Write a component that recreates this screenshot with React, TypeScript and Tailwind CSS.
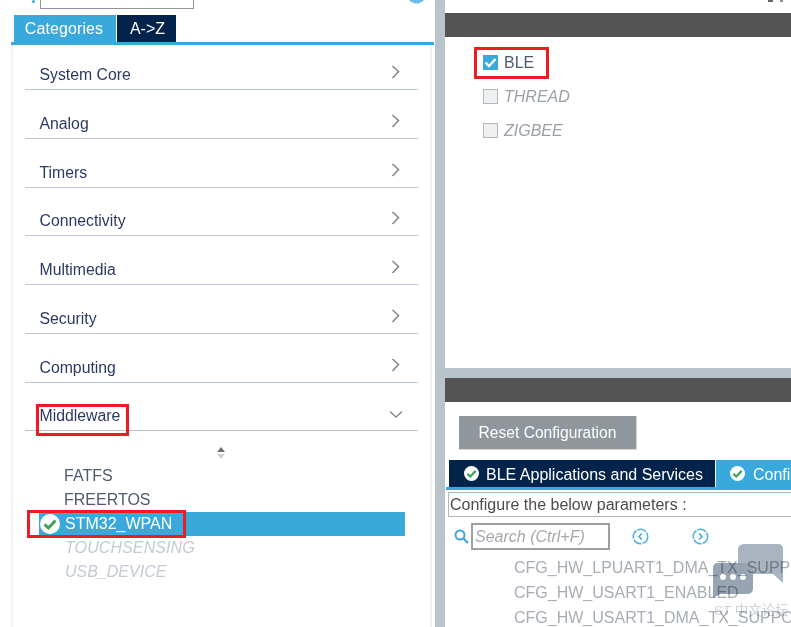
import React from "react";

const font = "font-['Liberation_Sans',Arial,sans-serif]";

function Chevron() {
  return (
    <svg width="9" height="14" viewBox="0 0 9 14" className="mr-[18px] mb-[10px]" fill="none">
      <path d="M1.5 1 L7.5 6.5 L1.5 13" stroke="#85898c" strokeWidth="1.6" />
    </svg>
  );
}

function Row({ label, first }: { label: string; first?: boolean }) {
  return (
    <div className={`mx-[12px] border-b border-[#bcc6dc] flex items-end justify-between ${first ? "h-[45px]" : "h-[48.75px]"}`}>
      <span className="pl-[14.5px] pb-[5px] text-[15.8px] leading-[18px] text-[#2b3a63]">{label}</span>
      <Chevron />
    </div>
  );
}

function GreenCheck({ size }: { size: number }) {
  return (
    <svg width={size} height={size} viewBox="0 0 20 20" className="shrink-0">
      <circle cx="10" cy="10" r="10" fill="#fff" />
      <path d="M4.5 10.5 L8.5 14 L15.5 6.5" stroke="#3fa35f" strokeWidth="3" fill="none" />
    </svg>
  );
}

function RoundArrow({ dir }: { dir: "l" | "r" }) {
  return (
    <svg width="17" height="17" viewBox="0 0 17 17" fill="none">
      <circle cx="8.5" cy="8.5" r="7.2" stroke="#4db3e2" strokeWidth="1.6" strokeDasharray="9 1.2" />
      <path d={dir === "l" ? "M9.8 5.5 L7 8.5 L9.8 11.5" : "M7.2 5.5 L10 8.5 L7.2 11.5"} stroke="#39a9dc" strokeWidth="1.5" />
    </svg>
  );
}

export default function App() {
  return (
    <div className={`${font} relative w-[791px] h-[627px] overflow-hidden bg-[#b8c4ca] flex`}>
      {/* Left */}
      <div className="w-[435px] h-full bg-white flex flex-col shrink-0">
        <div className="h-[15px] relative shrink-0">
          <div className="ml-[40px] w-[154px] h-[9px] border border-t-0 border-[#8f9599]" />
          <div className="absolute left-[32px] top-0 w-[3px] h-[3px] bg-[#39a9dc] rounded-full" />
          <svg width="16" height="4" viewBox="0 0 16 4" className="absolute left-[409px] top-0">
            <path d="M0 0 H15 L13 2 L11 2.5 L10 3.5 L5 3.5 L4 2.5 L2 2 Z" fill="#6cbde6" />
          </svg>
        </div>
        <div className="flex ml-[14px] h-[27px] shrink-0 gap-[1px]">
          <div className="w-[102px] pt-[1px] pr-[2px] bg-[#39a9dc] text-white text-[16px] tracking-[0.1px] flex items-center justify-center">Categories</div>
          <div className="w-[59px] pt-[1px] pl-[2px] bg-[#03234b] text-white text-[16px] flex items-center justify-center">A-&gt;Z</div>
        </div>
        <div className="ml-[11px] w-[423px] h-[3px] bg-[#39a9dc] shrink-0" />
        <div className="ml-[11px] w-[421px] flex-1 border-x-[2px] border-[#f0f1f1]">
          <Row first label="System Core" />
          <Row label="Analog" />
          <Row label="Timers" />
          <Row label="Connectivity" />
          <Row label="Multimedia" />
          <Row label="Security" />
          <Row label="Computing" />
          <div className="mx-[12px] h-[48.75px] border-b border-[#bcc2c6] flex items-end justify-between">
            <span className="pl-[14.5px] pb-[5px] text-[15.8px] leading-[18px] text-[#2b3a63]">Middleware</span>
            <svg width="14" height="9" viewBox="0 0 14 9" className="mr-[15px] mb-[11px]" fill="none">
              <path d="M1 1.5 L7 7 L13 1.5" stroke="#85898c" strokeWidth="1.5" />
            </svg>
          </div>
          <div className="flex flex-col pt-[15px]">
            <svg width="10" height="14" viewBox="0 0 10 14" className="ml-[203px]">
              <path d="M5 1 L9 6 L1 6 Z" fill="#6a6f72" />
              <path d="M5 13 L9 8 L1 8 Z" fill="#cfd2d4" />
            </svg>
            <div className="pl-[51px] mt-[4px] h-[24px] flex items-center text-[16px] text-[#4d5a70]">FATFS</div>
            <div className="pl-[51px] h-[24px] flex items-center text-[16px] text-[#4d5a70]">FREERTOS</div>
            <div className="ml-[26px] w-[366px] h-[24px] bg-[#39a9dc] flex items-center text-[16px] text-white">
              <span className="ml-[1px] mr-[5px] flex"><GreenCheck size={20} /></span>
              STM32_WPAN
            </div>
            <div className="pl-[52px] h-[24px] flex items-center text-[16px] tracking-[0.1px] italic text-[#c3cad4]">TOUCHSENSING</div>
            <div className="pl-[52px] h-[24px] flex items-center text-[16px] italic text-[#c3cad4]">USB_DEVICE</div>
          </div>
        </div>
      </div>

      {/* Right */}
      <div className="ml-[10px] flex-1 min-w-0 h-full flex flex-col">
        <div className="h-[368px] bg-white shrink-0 flex flex-col">
          <div className="h-[13px] flex justify-end gap-[7px] pr-[8px]">
            <div className="w-[5px] h-[2px] bg-[#6b6468]" />
            <div className="w-[3px] h-[2px] bg-[#8a8f9a]" />
          </div>
          <div className="h-[24px] bg-[#535453]" />
          <div className="pl-[38px] pt-[18px] flex flex-col gap-[19px] text-[16px]">
            <div className="flex items-center gap-[6px] h-[15px]">
              <span className="w-[15px] h-[15px] bg-[#39a9dc] flex items-center justify-center">
                <svg width="13" height="11" viewBox="0 0 13 11" fill="none"><path d="M1.5 5.5 L5 9 L11.5 2" stroke="#fff" strokeWidth="2.4" /></svg>
              </span>
              <span className="text-[#4d5a70]">BLE</span>
            </div>
            <div className="flex items-center gap-[6px] h-[15px]">
              <span className="w-[15px] h-[15px] bg-[#eef0f2] border border-[#b3b8bb]" />
              <span className="italic text-[#9aa0a8] w-[67px] overflow-hidden">THREAD</span>
            </div>
            <div className="flex items-center gap-[6px] h-[15px]">
              <span className="w-[15px] h-[15px] bg-[#eef0f2] border border-[#b3b8bb]" />
              <span className="italic text-[#9aa0a8]">ZIGBEE</span>
            </div>
          </div>
        </div>
        <div className="h-[10px] shrink-0" />
        <div className="flex-1 bg-white flex flex-col min-h-0">
          <div className="h-[24px] bg-[#535453] shrink-0" />
          <div className="ml-[14px] mt-[14px] w-[178px] h-[34px] bg-[#90979c] border-b border-r border-[#d3d7da] text-white text-[15.6px] flex items-center justify-center shrink-0">Reset Configuration</div>
          <div className="ml-[4px] mt-[10px] flex h-[27px] shrink-0 gap-[1px]">
            <div className="w-[266px] pt-[2px] bg-[#03234b] text-white text-[16px] flex items-center whitespace-nowrap">
              <span className="ml-[15px] mr-[7px] mb-[2px] flex"><GreenCheck size={15} /></span>BLE Applications and Services
            </div>
            <div className="flex-1 pt-[2px] bg-[#39a9dc] text-white text-[16px] flex items-center overflow-hidden whitespace-nowrap">
              <span className="ml-[14px] mr-[8px] mb-[2px] flex"><GreenCheck size={15} /></span>Configuration
            </div>
          </div>
          <div className="ml-[1px] h-[3px] bg-[#39a9dc] shrink-0" />
          <div className="ml-[3px] mt-[2px] h-[25px] pt-[1px] border border-[#b4b8bb] border-r-0 flex items-center text-[16px] text-[#4f4a50] pl-[1px] shrink-0 whitespace-nowrap">Configure the below parameters :</div>
          <div className="mt-[6px] flex items-center shrink-0 h-[27px]">
            <svg width="15" height="15" viewBox="0 0 15 15" className="ml-[9px] mr-[2px]" fill="none">
              <circle cx="6" cy="6" r="4.5" stroke="#39a9dc" strokeWidth="2" />
              <path d="M9.5 9.5 L14 14" stroke="#39a9dc" strokeWidth="2.2" />
            </svg>
            <div className="w-[139px] h-[27px] pt-[1px] border-2 border-[#9aa0a4] flex items-center pl-[2px] text-[16px] italic text-[#a4a9ad]">Search (Ctrl+F)</div>
            <span className="ml-[22px] flex"><RoundArrow dir="l" /></span>
            <span className="ml-[43px] flex"><RoundArrow dir="r" /></span>
          </div>
          <div className="pl-[69px] pt-[5px] text-[16px] text-[#a7adb5] whitespace-nowrap leading-[25px] flex flex-col">
            <span>CFG_HW_LPUART1_DMA_TX_SUPPORT</span>
            <span>CFG_HW_USART1_ENABLED</span>
            <span>CFG_HW_USART1_DMA_TX_SUPPORT</span>
          </div>
        </div>
      </div>

      {/* Annotation rectangles */}
      <div className="absolute left-[36px] top-[404px] w-[93px] h-[32px] border-[3px] border-[#ed1c24]" />
      <div className="absolute left-[27px] top-[510px] w-[159px] h-[28px] border-[3px] border-[#ed1c24]" />
      <div className="absolute left-[474px] top-[47px] w-[75px] h-[32px] border-[3px] border-[#ed1c24]" />

      {/* Watermark */}
      <div className="absolute left-[712px] top-[544px] w-[72px] h-[83px] pointer-events-none">
        <svg width="72" height="56" viewBox="0 0 72 56" className="mix-blend-multiply">
          <path d="M32 0 H66 Q71 0 71 5 V39 L61 30 H26 V6 Q26 0 32 0 Z" fill="#a9b4c0" />
          <path d="M6 19 H35 Q41 19 41 25 V44 Q41 50 35 50 H8 L1 54 V24 Q1 19 6 19 Z" fill="#98a4b2" />
          <circle cx="11" cy="33" r="3" fill="#fff" />
          <circle cx="21" cy="33" r="3" fill="#fff" />
          <circle cx="31" cy="33" r="3" fill="#fff" />
        </svg>
        <div className="mt-[3px] ml-[2px] text-[13.5px] leading-[15px] text-[#cdd3d9] font-['Liberation_Sans','Noto_Sans_CJK_SC',sans-serif] whitespace-nowrap mix-blend-multiply">ST 中文论坛</div>
      </div>
    </div>
  );
}
